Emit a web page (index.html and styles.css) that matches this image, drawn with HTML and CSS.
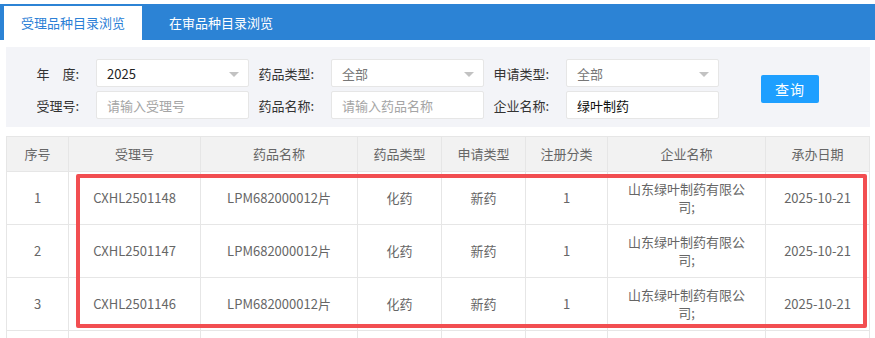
FILE: index.html
```html
<!DOCTYPE html>
<html>

<head>
    <meta charset="utf-8">
    <title>品种目录浏览</title>
    <meta name="viewport" content="width=device-width, initial-scale=1">
    <link rel="stylesheet" href="styles.css">
</head>

<body>
    <ul class="tabs">
        <li class="tab active">受理品种目录浏览</li>
        <li class="tab">在审品种目录浏览</li>
    </ul>

    <div class="content">
        <form class="search" action="">
            <div class="fields">
                <div class="field">
                    <label>年&emsp;度:</label>
                    <div class="select value">2025</div>
                </div>
                <div class="field">
                    <label>药品类型:</label>
                    <div class="select">全部</div>
                </div>
                <div class="field">
                    <label>申请类型:</label>
                    <div class="select">全部</div>
                </div>
                <div class="field">
                    <label>受理号:</label>
                    <input class="input" placeholder="请输入受理号">
                </div>
                <div class="field">
                    <label>药品名称:</label>
                    <input class="input" placeholder="请输入药品名称">
                </div>
                <div class="field">
                    <label>企业名称:</label>
                    <input class="input filled" value="绿叶制药">
                </div>
            </div>
            <button type="button" class="btn">查询</button>
        </form>

        <div class="table-wrap">
            <table class="list">
                <colgroup>
                    <col style="width:62px">
                    <col style="width:132px">
                    <col style="width:157px">
                    <col style="width:84px">
                    <col style="width:84px">
                    <col style="width:82px">
                    <col style="width:158px">
                    <col>
                </colgroup>
                <thead>
                    <tr>
                        <th>序号</th>
                        <th>受理号</th>
                        <th>药品名称</th>
                        <th>药品类型</th>
                        <th>申请类型</th>
                        <th>注册分类</th>
                        <th>企业名称</th>
                        <th>承办日期</th>
                    </tr>
                </thead>
                <tbody>
                    <tr>
                        <td>1</td>
                        <td>CXHL2501148</td>
                        <td>LPM682000012片</td>
                        <td>化药</td>
                        <td>新药</td>
                        <td>1</td>
                        <td class="company">山东绿叶制药有限公司;</td>
                        <td>2025-10-21</td>
                    </tr>
                    <tr>
                        <td>2</td>
                        <td>CXHL2501147</td>
                        <td>LPM682000012片</td>
                        <td>化药</td>
                        <td>新药</td>
                        <td>1</td>
                        <td class="company">山东绿叶制药有限公司;</td>
                        <td>2025-10-21</td>
                    </tr>
                    <tr>
                        <td>3</td>
                        <td>CXHL2501146</td>
                        <td>LPM682000012片</td>
                        <td>化药</td>
                        <td>新药</td>
                        <td>1</td>
                        <td class="company">山东绿叶制药有限公司;</td>
                        <td>2025-10-21</td>
                    </tr>
                    <tr class="more">
                        <td></td>
                        <td></td>
                        <td></td>
                        <td></td>
                        <td></td>
                        <td></td>
                        <td></td>
                        <td></td>
                    </tr>
                </tbody>
            </table>
            <div class="highlight"></div>
        </div>
    </div>
</body>

</html>
```

FILE: styles.css
```css
* {
    margin: 0;
    padding: 0;
    box-sizing: border-box;
}

body {
    font: 13px "Noto Sans CJK SC", "Liberation Sans", sans-serif;
    color: #333;
    background: #fff;
}

.tabs {
    list-style: none;
    display: flex;
    margin-top: 4px;
    height: 36px;
    padding: 2px 0 0 4px;
    background: #2c83d5;
}

.tab {
    height: 34px;
    line-height: 34px;
    padding: 0 17px;
    margin-right: 10px;
    color: #fff;
}

.tab.active {
    background: #fff;
    color: #2b80d6;
}

.content {
    margin: 7px 5px 0 6px;
}

.search {
    display: flex;
    align-items: center;
    background: #f3f4f8;
    padding: 12px 0 8px 8px;
}

.fields {
    display: grid;
    grid-template-columns: repeat(3, 235px);
    row-gap: 4px;
}

.field {
    display: flex;
    align-items: center;
}

.field label {
    width: 82px;
    padding-right: 17px;
    text-align: right;
    color: #333;
}

.select,
.input {
    width: 153px;
    height: 28px;
    line-height: 26px;
    padding: 0 10px;
    border: 1px solid #e6e6e6;
    border-radius: 2px;
    background: #fff;
    font: inherit;
    color: #777;
}

.select {
    position: relative;
    padding-top: 2px;
    line-height: 24px;
}

.select::after {
    content: "";
    position: absolute;
    right: 9px;
    top: 12px;
    border-left: 5px solid transparent;
    border-right: 5px solid transparent;
    border-top: 5px solid #c2c2c2;
}

.select.value {
    color: #222;
}

.input::placeholder {
    color: #a5a5a5;
}

.input.filled {
    color: #111;
}

.btn {
    margin-left: 42px;
    width: 58px;
    height: 28px;
    border: none;
    border-radius: 2px;
    background: #1e9fff;
    color: #fff;
    font: inherit;
    font-size: 14px;
    letter-spacing: 1px;
}

.table-wrap {
    position: relative;
    margin-top: 9px;
}

.list {
    width: 100%;
    border-collapse: collapse;
    table-layout: fixed;
    color: #666;
}

.list th,
.list td {
    border: 1px solid #e6e6e6;
    padding: 8px 4px;
    line-height: 18px;
    text-align: center;
    font-weight: normal;
    white-space: nowrap;
}

.list th {
    background: #f2f2f2;
}

.list td {
    height: 53px;
}

.list td.company {
    padding: 8px 18px;
    white-space: normal;
}

.highlight {
    position: absolute;
    left: 70px;
    top: 38px;
    width: 791px;
    height: 154px;
    border: 4px solid #f24e51;
    border-radius: 2px;
}
```
